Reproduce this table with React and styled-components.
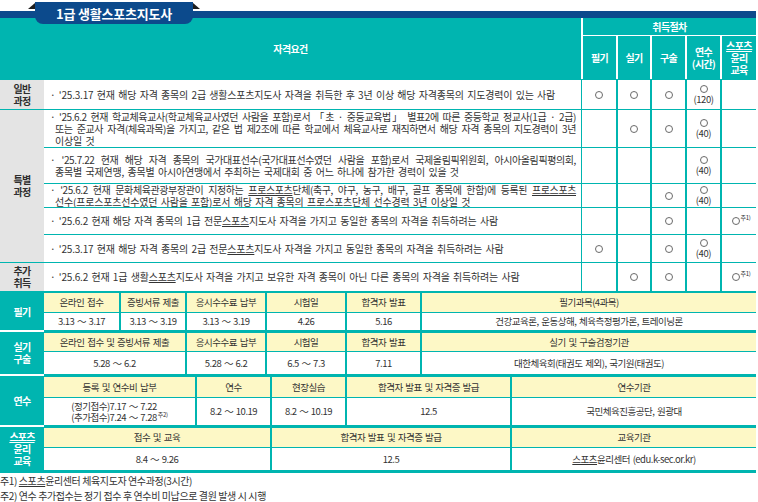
import React from 'react';
import styled, { createGlobalStyle } from 'styled-components';

const TEAL = '#00b5b0';
const NAVY = '#0c4a8c';
const YELLOW = '#fdf8c6';
const GRAY = '#e4e4e4';
const INK = '#333';

const GlobalStyle = createGlobalStyle`
    body {
        margin: 0;
        background: #fff;
        color: ${INK};
        font-family: "Noto Sans CJK KR", "Noto Sans", sans-serif;
    }
`;

const Page = styled.div`
    width: 756px;
`;

// title ribbon
const TitleBar = styled.div`
    height: 16px;
    padding-left: 35px;
    background: linear-gradient(to bottom, transparent 9px, ${NAVY} 9px);
`;

const Tab = styled.div`
    position: relative;
    z-index: 2;
    margin-top: 2px;
    width: 158px;
    height: 22px;
    background: ${NAVY};
    border-radius: 0 0 8px 8px;
    color: #fff;
    font-size: 13px;
    font-weight: 700;
    letter-spacing: -0.2px;
    display: flex;
    align-items: center;
    justify-content: center;

    &::before, &::after {
        content: '';
        position: absolute;
        top: 1px;
        width: 0;
        height: 0;
        border-bottom: 6px solid #1e1e1e;
    }
    &::before {
        left: -7px;
        border-left: 7px solid transparent;
    }
    &::after {
        right: -7px;
        border-right: 7px solid transparent;
    }
`;

// upper table
const Head = styled.div`
    display: grid;
    grid-template-columns: 581px 35px 34px 35px 35px 36px;
    grid-template-rows: 17px 44px;
    background: ${TEAL};
    color: #fff;
    font-size: 10px;
    font-weight: 700;
    letter-spacing: -0.6px;
    line-height: 12px;
`;

const HeadCell = styled.div`
    display: flex;
    align-items: center;
    justify-content: center;
    text-align: center;
    ${p => p.$tall && 'grid-row: span 2;'}
    ${p => p.$wide && 'grid-column: span 5;'}
    ${p => !p.$tall && 'border-left: 2px solid #fff;'}
    ${p => p.$sub && 'border-top: 1px solid #fff;'}
`;

const Body = styled.div`
    display: grid;
    grid-template-columns: 44px 537px 35px 34px 35px 35px 36px;
    grid-template-rows: 30px 38px 36px 24px 27px 28px 29px;
`;

const RowLabel = styled.div`
    grid-row: span ${p => p.$rows || 1};
    display: flex;
    align-items: center;
    justify-content: center;
    text-align: center;
    background: ${GRAY};
    border-top: 1px solid ${TEAL};
    font-size: 10px;
    font-weight: 700;
    letter-spacing: -0.8px;
    line-height: 12px;
    color: #2e2e2e;
`;

const TextCell = styled.div`
    display: flex;
    flex-direction: column;
    justify-content: center;
    padding: 0 5px 0 11px;
    border-top: 1px solid ${TEAL};
    font-size: 10px;
    line-height: 12px;
`;

const Line = styled.div`
    text-align: ${p => p.$fill ? 'justify' : 'left'};
    text-align-last: ${p => p.$fill ? 'justify' : 'left'};
    letter-spacing: ${p => p.$fill ? '-0.4px' : '-0.2px'};
    word-spacing: ${p => p.$fill ? '0.5px' : '1.4px'};
    ${p => p.$lead && 'text-indent: -5px;'}
`;

const U = styled.span`
    text-decoration: underline;
    text-underline-offset: 1px;
    text-decoration-thickness: 1px;
`;

const MarkCell = styled.div`
    display: flex;
    flex-direction: column;
    align-items: center;
    justify-content: center;
    gap: 1px;
    border-top: 1px solid ${TEAL};
    border-left: ${p => p.$first ? 1 : 2}px solid ${TEAL};
    font-size: 9.5px;
    letter-spacing: -0.4px;
    line-height: 10px;
`;

const Circle = styled.span`
    display: block;
    width: 8px;
    height: 8px;
    border: 1px solid #6a6a6a;
    border-radius: 50%;
    box-sizing: border-box;
`;

const MarkRow = styled.div`
    display: flex;
    align-items: flex-start;
    padding-left: 4px;
`;

const Sup = styled.sup`
    font-size: 6px;
    line-height: 6px;
    letter-spacing: -0.3px;
    vertical-align: top;
    margin-left: 1px;
    margin-top: -2px;
`;

// lower schedule
const Lower = styled.div`
    border-bottom: 3px solid ${TEAL};
`;

const Section = styled.div`
    display: grid;
    grid-template-columns: 44px 712px;
`;

const SideLabel = styled.div`
    display: flex;
    align-items: center;
    justify-content: center;
    text-align: center;
    background: ${TEAL};
    border-top: 2px solid ${p => p.$first ? TEAL : '#fff'};
    color: #fff;
    font-size: 10px;
    font-weight: 700;
    letter-spacing: -0.8px;
    line-height: 12px;
`;

const Sheet = styled.div`
    display: grid;
    grid-template-columns: ${p => p.$cols};
    grid-template-rows: ${p => p.$rows};
    border-top: ${p => p.$first ? 2 : 3}px solid ${TEAL};
`;

const Cell = styled.div`
    display: flex;
    align-items: center;
    justify-content: center;
    text-align: center;
    box-sizing: border-box;
    background: ${p => p.$head ? YELLOW : '#fff'};
    border-top: ${p => p.$head ? 'none' : `1px solid ${TEAL}`};
    border-left: ${p => p.$lead ? 'none' : `2px solid ${TEAL}`};
    font-size: 9.5px;
    letter-spacing: -0.5px;
    word-spacing: 1px;
    line-height: 11px;
    color: #333;
`;

const Stack = styled.div`
    text-align: left;
`;

const Notes = styled.div`
    font-size: 10px;
    letter-spacing: -0.4px;
    line-height: 15px;
    color: #333;
`;

const Spo = () => <U>스포츠</U>;
const Pro = () => <U>프로스포츠</U>;

const rows = [
    {
        label: <>일반<br />과정</>, span: 1,
        lines: [<>· '25.3.17 현재 해당 자격 종목의 2급 생활스포츠지도사 자격을 취득한 후 3년 이상 해당 자격종목의 지도경력이 있는 사람</>],
        marks: [1, 1, 1, '(120)', 0],
    },
    {
        label: <>특별<br />과정</>, span: 5,
        lines: [
            <>· '25.6.2 현재 학교체육교사(학교체육교사였던 사람을 포함)로서 「초 · 중등교육법」 별표2에 따른 중등학교 정교사(1급 · 2급)</>,
            <>또는 준교사 자격(체육과목)을 가지고, 같은 법 제2조에 따른 학교에서 체육교사로 재직하면서 해당 자격 종목의 지도경력이 3년</>,
            <>이상일 것</>,
        ],
        marks: [0, 1, 1, '(40)', 0],
    },
    {
        lines: [
            <>· '25.7.22 현재 해당 자격 종목의 국가대표선수(국가대표선수였던 사람을 포함)로서 국제올림픽위원회, 아시아올림픽평의회,</>,
            <>종목별 국제연맹, 종목별 아시아연맹에서 주최하는 국제대회 중 어느 하나에 참가한 경력이 있을 것</>,
        ],
        marks: [0, 0, 0, '(40)', 0],
    },
    {
        lines: [
            <>· '25.6.2 현재 문화체육관광부장관이 지정하는 <Pro />단체(축구, 야구, 농구, 배구, 골프 종목에 한함)에 등록된 <Pro /></>,
            <>선수(<Pro />선수였던 사람을 포함)로서 해당 자격 종목의 <Pro />단체 선수경력 3년 이상일 것</>,
        ],
        marks: [0, 0, 1, '(40)', 0],
    },
    {
        lines: [<>· '25.6.2 현재 해당 자격 종목의 1급 전문<Spo />지도사 자격을 가지고 동일한 종목의 자격을 취득하려는 사람</>],
        marks: [0, 0, 1, 0, 'note'],
    },
    {
        lines: [<>· '25.3.17 현재 해당 자격 종목의 2급 전문<Spo />지도사 자격을 가지고 동일한 종목의 자격을 취득하려는 사람</>],
        marks: [1, 0, 1, '(40)', 0],
    },
    {
        label: <>추가<br />취득</>, span: 1,
        lines: [<>· '25.6.2 현재 1급 생활<Spo />지도사 자격을 가지고 보유한 자격 종목이 아닌 다른 종목의 자격을 취득하려는 사람</>],
        marks: [0, 1, 1, 0, 'note'],
    },
];

const Mark = ({ value }) => {
    if (!value) return null;
    if (value === 'note') {
        return <MarkRow><Circle /><Sup>주1)</Sup></MarkRow>;
    }
    if (value === 1) return <Circle />;
    return <><Circle /><span>{value}</span></>;
};

const sections = [
    {
        label: <>필기</>,
        cols: '75px 66px 80px 80px 75px 336px',
        rows: '19px 18px',
        heads: ['온라인 접수', '증빙서류 제출', '응시수수료 납부', '시험일', '합격자 발표', '필기과목(4과목)'],
        data: ['3.13 ～ 3.17', '3.13 ～ 3.19', '3.13 ～ 3.19', '4.26', '5.16', '건강교육론, 운동상해, 체육측정평가론, 트레이닝론'],
    },
    {
        label: <>실기<br />구술</>,
        cols: '141px 80px 80px 75px 336px',
        rows: '18px 23px',
        heads: ['온라인 접수 및 증빙서류 제출', '응시수수료 납부', '시험일', '합격자 발표', '실기 및 구술검정기관'],
        data: ['5.28 ～ 6.2', '5.28 ～ 6.2', '6.5 ～ 7.3', '7.11', '대한체육회(태권도 제외), 국기원(태권도)'],
    },
    {
        label: <>연수</>,
        cols: '151px 75px 75px 165px 246px',
        rows: '20px 28px',
        heads: ['등록 및 연수비 납부', '연수', '현장실습', '합격자 발표 및 자격증 발급', '연수기관'],
        data: [
            <Stack>(정기접수)7.17 ～ 7.22<br />(추가접수)7.24 ～ 7.28<Sup>주2)</Sup></Stack>,
            '8.2 ～ 10.19', '8.2 ～ 10.19', '12.5', '국민체육진흥공단, 원광대',
        ],
    },
    {
        label: <><Spo /><br />윤리<br />교육</>,
        cols: '226px 240px 246px',
        rows: '19px 23px',
        heads: ['접수 및 교육', '합격자 발표 및 자격증 발급', '교육기관'],
        data: ['8.4 ～ 9.26', '12.5', <><Spo />윤리센터 (edu.k-sec.or.kr)</>],
    },
];

export default function App() {
    return (
        <Page>
            <GlobalStyle />
            <TitleBar>
                <Tab>1급 생활스포츠지도사</Tab>
            </TitleBar>

            <Head>
                <HeadCell $tall>자격요건</HeadCell>
                <HeadCell $wide>취득절차</HeadCell>
                <HeadCell $sub>필기</HeadCell>
                <HeadCell $sub>실기</HeadCell>
                <HeadCell $sub>구술</HeadCell>
                <HeadCell $sub><span>연수<br />(시간)</span></HeadCell>
                <HeadCell $sub><span><Spo /><br />윤리<br />교육</span></HeadCell>
            </Head>

            <Body>
                {rows.map((row, i) => (
                    <React.Fragment key={i}>
                        {row.label && <RowLabel $rows={row.span}>{row.label}</RowLabel>}
                        <TextCell>
                            {row.lines.map((line, j) => (
                                <Line key={j} $lead={j === 0} $fill={j < row.lines.length - 1}>{line}</Line>
                            ))}
                        </TextCell>
                        {row.marks.map((m, k) => (
                            <MarkCell key={k} $first={k === 0}><Mark value={m} /></MarkCell>
                        ))}
                    </React.Fragment>
                ))}
            </Body>

            <Lower>
                {sections.map((s, i) => (
                    <Section key={i}>
                        <SideLabel $first={i === 0}><span>{s.label}</span></SideLabel>
                        <Sheet $cols={s.cols} $rows={s.rows} $first={i === 0}>
                            {s.heads.map((h, k) => <Cell key={'h' + k} $head $lead={k === 0}>{h}</Cell>)}
                            {s.data.map((d, k) => <Cell key={'d' + k} $lead={k === 0}>{d}</Cell>)}
                        </Sheet>
                    </Section>
                ))}
            </Lower>

            <Notes>
                <div>주1) <Spo />윤리센터 체육지도자 연수과정(3시간)</div>
                <div>주2) 연수 추가접수는 정기 접수 후 연수비 미납으로 결원 발생 시 시행</div>
            </Notes>
        </Page>
    );
}
